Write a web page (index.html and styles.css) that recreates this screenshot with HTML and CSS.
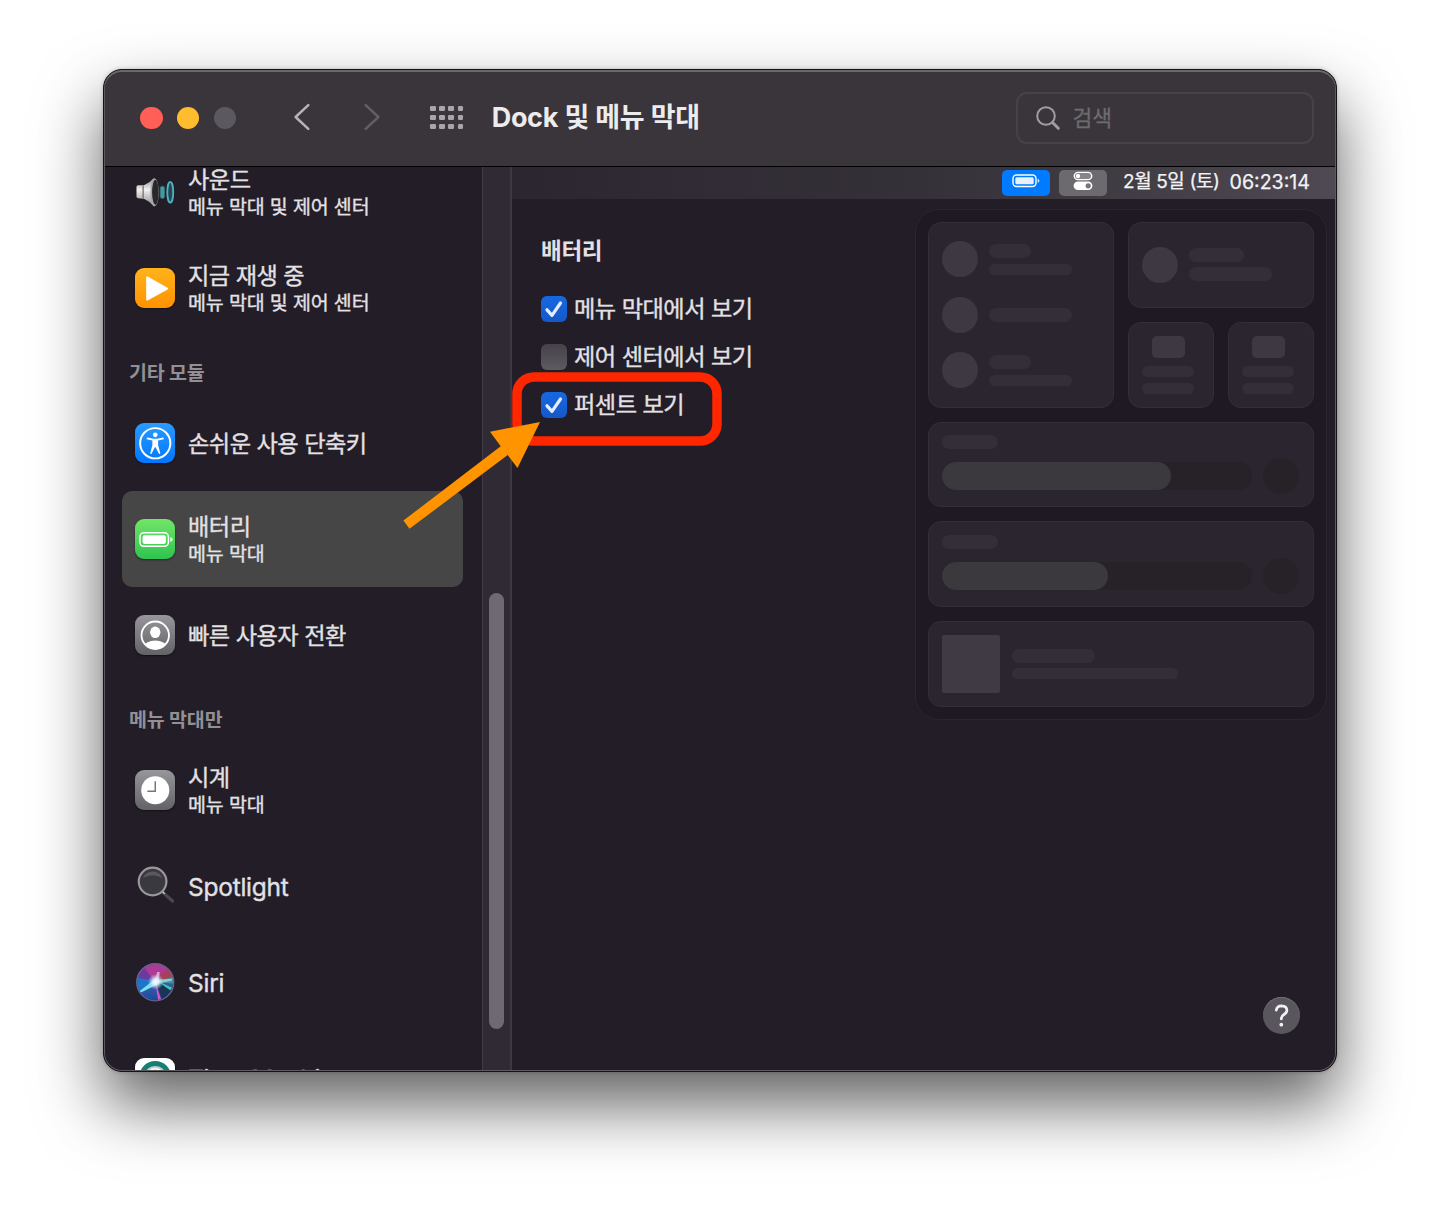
FILE: index.html
```html
<!DOCTYPE html>
<html lang="ko">
<head>
<meta charset="utf-8">
<title>Dock 및 메뉴 막대</title>
<link rel="stylesheet" href="styles.css">
</head>
<body>
<div class="window">
  <header class="titlebar">
    <div class="lights"><i class="light red"></i><i class="light yellow"></i><i class="light off"></i></div>
    <svg class="chev back" width="18" height="28" viewBox="0 0 18 28"><path d="M15.3 2.2 2.6 14l12.7 11.8"/></svg>
    <svg class="chev fwd" width="18" height="28" viewBox="0 0 18 28"><path d="M2.7 2.2 15.4 14 2.7 25.8"/></svg>
    <div class="dots"><i></i><i></i><i></i><i></i><i></i><i></i><i></i><i></i><i></i><i></i><i></i><i></i></div>
    <h1 class="title">Dock 및 메뉴 막대</h1>
    <div class="search">
      <svg width="26" height="26" viewBox="0 0 26 26"><circle cx="11" cy="11" r="8.800"/><path class="handle" d="M17.500 17.500 23.300 23.300"/></svg>
      <span>검색</span>
    </div>
  </header>
  <div class="body">
    <nav class="sidebar">
      <div class="list">
        <div class="item">
          <svg class="icon" viewBox="0 0 41 41">
            <defs><linearGradient id="cone" x1="0" y1="0" x2="0" y2="1"><stop offset="0" stop-color="#8d8d8d"/><stop offset=".4" stop-color="#f0f0f0"/><stop offset="1" stop-color="#8a8a8a"/></linearGradient></defs>
            <path fill="url(#cone)" d="M1.500 16Q1 13.800 3 13.500L9 13.300Q15 11 18.500 6.500Q20 6 21 8L21 33Q20 36 18.500 34.500Q15 29.500 9 27L3 26.500Q1 26 1.500 24Z"/>
            <path fill="#55555a" d="M7.500 14h1.500v12.500H7.500z" opacity=".7"/>
            <ellipse cx="19.800" cy="20.500" rx="4.300" ry="14" fill="#a9a9ab"/>
            <ellipse cx="20.600" cy="20.500" rx="3.300" ry="12.700" fill="#29272b"/>
            <rect x="25.500" y="14.300" width="4.500" height="12.500" rx="2.200" fill="#4c979d" stroke="#2a7079" stroke-width=".8"/>
            <ellipse cx="35.700" cy="20.500" rx="3" ry="10.500" fill="#29464f" stroke="#4fb4c0" stroke-width="1.800"/>
          </svg>
          <div class="txt"><b>사운드</b><small>메뉴 막대 및 제어 센터</small></div>
        </div>
        <div class="item">
          <svg class="icon tile orange" viewBox="0 0 41 41"><path fill="#fff" stroke="#fff" stroke-width="2" stroke-linejoin="round" d="M12.300 9.500v22.500L32.500 20.800z"/></svg>
          <div class="txt"><b>지금 재생 중</b><small>메뉴 막대 및 제어 센터</small></div>
        </div>
        <h2 class="group">기타 모듈</h2>
        <div class="item">
          <svg class="icon tile blue" viewBox="0 0 41 41"><circle cx="20.500" cy="20.500" r="15.300" fill="none" stroke="#fff" stroke-width="2"/><circle cx="20.500" cy="12" r="2.400" fill="#fff"/><path fill="#fff" d="M12.800 14.800 18.500 16h4L28.200 14.800Q29.700 15 29 16.400L23.400 17.800V22.500L25.600 30.300Q25.500 31.800 24.200 31.200L20.900 24.500h-.8L16.800 31.200Q15.500 31.800 15.400 30.300L17.600 22.500V17.800L12 16.400Q11.300 15 12.800 14.800Z"/></svg>
          <div class="txt"><b>손쉬운 사용 단축키</b></div>
        </div>
        <div class="item selected">
          <svg class="icon tile green" viewBox="0 0 41 41"><rect x="5" y="14" width="28.800" height="13.600" rx="4" fill="none" stroke="#fff" stroke-width="1.500"/><rect x="7.700" y="16.500" width="23.600" height="8.700" rx="1.800" fill="#fff"/><path fill="#fff" d="M35.800 18.300Q38 19 38 20.800T35.800 23.300Z"/></svg>
          <div class="txt"><b>배터리</b><small>메뉴 막대</small></div>
        </div>
        <div class="item">
          <svg class="icon tile gray" viewBox="0 0 41 41"><defs><clipPath id="head"><circle cx="20.500" cy="20.500" r="13.600"/></clipPath></defs><circle cx="20.500" cy="20.500" r="13.900" fill="none" stroke="#fff" stroke-width="1.900"/><g clip-path="url(#head)" fill="#fff"><ellipse cx="20.500" cy="17.500" rx="5.200" ry="5.900"/><ellipse cx="20.500" cy="33" rx="11.500" ry="7.300"/></g></svg>
          <div class="txt"><b>빠른 사용자 전환</b></div>
        </div>
        <h2 class="group">메뉴 막대만</h2>
        <div class="item">
          <svg class="icon tile gray" viewBox="0 0 41 41"><circle cx="20.500" cy="20.500" r="14.200" fill="#fff"/><path d="M20.500 11.500V21.600H12.500" fill="none" stroke="#77767a" stroke-width="1.500"/></svg>
          <div class="txt"><b>시계</b><small>메뉴 막대</small></div>
        </div>
        <div class="item">
          <svg class="icon" viewBox="0 0 41 41"><path d="M29 27.500 38 35.500" stroke="#49484c" stroke-width="3.400" stroke-linecap="round"/><path d="M27.800 25.800 30 28" stroke="#ccc" stroke-width="1.500"/><circle cx="17.800" cy="15.700" r="14" fill="#3b3940" stroke="#99989b" stroke-width="2.200"/><path d="M8 12.200a10.500 10.500 0 0 1 19.600 0Q17.800 6.700 8 12.200" fill="#5a5860"/></svg>
          <div class="txt"><b class="latin">Spotlight</b></div>
        </div>
        <div class="item">
          <svg class="icon" viewBox="0 0 41 41">
            <defs>
              <linearGradient id="orb" x1=".35" y1="0" x2=".45" y2="1"><stop offset="0" stop-color="#a83a9f"/><stop offset=".35" stop-color="#b03a8e"/><stop offset=".55" stop-color="#3a5cb0"/><stop offset="1" stop-color="#1a4a96"/></linearGradient>
              <radialGradient id="glow"><stop offset="0" stop-color="#fff"/><stop offset=".45" stop-color="#e2f2ff" stop-opacity=".8"/><stop offset="1" stop-color="#a3bdf0" stop-opacity="0"/></radialGradient>
              <clipPath id="ball"><circle cx="20.500" cy="20.500" r="18"/></clipPath>
            </defs>
            <circle cx="20.500" cy="20.500" r="18.800" fill="url(#orb)" stroke="#62648a" stroke-width="1.300"/>
            <g clip-path="url(#ball)">
              <path d="M0 8 8 4 20 20 0 22Z" fill="#6b3aa0"/>
              <path d="M20 18 34 6 40 18Z" fill="#a8405c"/><path d="M21 20 39 15 40 22Z" fill="#4b8e94"/>
              <path d="M21 20 39 26 28 40Z" fill="#1b3357"/><path d="M22 19 38 26 35.500 28.500Z" fill="#35c9ae"/>
              <path d="M19 19 3 16Q1 26 5 30Z" fill="#1f74c8"/>
              <path d="M20 17.500 4.500 29.500 6 31 24 22Z" fill="#72e4f2"/>
              <path d="M20.500 20 26.500 38 23.500 39Z" fill="#dd50c0"/><path d="M19.500 20 22.500 10 25 10 24 20Z" fill="#eba0d8"/>
              <path d="M21 18 38 17 37 19 22 22Z" fill="#7ed6cf"/>
              <circle cx="21" cy="20" r="8.200" fill="url(#glow)"/>
            </g>
          </svg>
          <div class="txt"><b class="latin">Siri</b></div>
        </div>
        <div class="item">
          <svg class="icon tile white" viewBox="0 0 41 41"><circle cx="20.500" cy="19" r="13.500" fill="#c4cecc" stroke="#177f72" stroke-width="5"/><circle cx="20.500" cy="20" r="9" fill="#63706e" stroke="#fff" stroke-width="2"/></svg>
          <div class="txt"><b class="latin">Time Machine</b></div>
        </div>
      </div>
    </nav>
    <div class="track"><div class="thumb"></div></div>
    <main class="main">
      <div class="menubar">
        <span class="pill on"><svg width="28" height="14" viewBox="0 0 28 14"><rect x="1" y="1" width="23" height="11.500" rx="3.500" fill="none" stroke="#fff" stroke-width="1.400"/><rect x="3.300" y="3.300" width="18.400" height="6.900" rx="1.500" fill="#e7f1ff"/><path fill="#cfe3ff" d="M25.600 4.800Q27.400 5.400 27.400 6.800T25.600 8.800Z"/></svg></span>
        <span class="pill"><svg width="20" height="20" viewBox="0 0 20 20"><rect x="1.300" y="1.400" width="17.400" height="7.200" rx="3.600" fill="#86848a" stroke="#fff" stroke-width="1.400"/><circle cx="5" cy="5" r="2.200" fill="#fff"/><rect x=".6" y="10.500" width="18.800" height="8.600" rx="4.300" fill="#fff"/><circle cx="15.200" cy="14.800" r="2.600" fill="#77757a"/></svg></span>
        <span class="clock"><span class="date">2월 5일 (토)</span><span>06:23:14</span></span>
      </div>
      <div class="content">
        <section class="settings">
          <h3>배터리</h3>
          <label class="opt"><span class="box checked"><svg viewBox="0 0 26 26"><path d="M6 13.800 11 19.300 19.500 7"/></svg></span>메뉴 막대에서 보기</label>
          <label class="opt"><span class="box"></span>제어 센터에서 보기</label>
          <label class="opt"><span class="box checked"><svg viewBox="0 0 26 26"><path d="M6 13.800 11 19.300 19.500 7"/></svg></span>퍼센트 보기</label>
        </section>
        <aside class="side">
          <div class="cc">
            <div class="card network">
              <div class="row"><i class="disc"></i><div class="lines"><i class="w42 h14"></i><i class="w83 h11"></i></div></div>
              <div class="row"><i class="disc"></i><div class="lines"><i class="w83 h14"></i></div></div>
              <div class="row"><i class="disc"></i><div class="lines"><i class="w42 h14"></i><i class="w83 h11"></i></div></div>
            </div>
            <div class="card focus"><div class="row"><i class="disc"></i><div class="lines tight"><i class="w55 h14"></i><i class="w83 h14"></i></div></div></div>
            <div class="card small"><i class="chip"></i><i class="bar"></i><i class="bar"></i></div>
            <div class="card small"><i class="chip"></i><i class="bar"></i><i class="bar"></i></div>
            <div class="card wide"><i class="label"></i><div class="row slide"><div class="slider"><i style="width:229px"></i></div><i class="disc dark"></i></div></div>
            <div class="card wide"><i class="label"></i><div class="row slide"><div class="slider"><i style="width:166px"></i></div><i class="disc dark"></i></div></div>
            <div class="card wide media"><i class="art"></i><div class="lines tight"><i class="w83 h14"></i><i class="w166 h11"></i></div></div>
          </div>
          <div class="help"><svg width="37" height="37" viewBox="0 0 37 37"><path d="M13.300 13.200Q13.800 8.800 18.500 8.800 23.900 9 23.900 13.300 23.900 15.700 21 17.500 18.300 19.200 18.300 21.900" fill="none" stroke="#f1f0f2" stroke-width="2.700" stroke-linecap="round"/><circle cx="18.300" cy="27.700" r="1.900" fill="#f1f0f2"/></svg></div>
        </aside>
      </div>
    </main>
  </div>
</div>
<svg class="annotation" width="1440" height="1207" viewBox="0 0 1440 1207">
  <rect x="517" y="377" width="200" height="64" rx="17" fill="none" stroke="#ff2600" stroke-width="9.500"/>
  <path fill="#ff9300" d="M403.400 520.600 500.700 446.200 490 431.700 540 422 517.500 468 507.700 455 409.500 528.800Z"/>
</svg>
</body>
</html>
```
FILE: styles.css
```css
* { box-sizing: border-box; }
body {
  margin: 0;
  width: 1440px;
  height: 1207px;
  padding: 69px 103px;
  background: #fff;
  overflow: hidden;
  position: relative;
  font-family: Inter, "Noto Sans CJK KR", sans-serif;
  color: #e3e1e4;
}
i { display: block; flex: none; }
h1, h2, h3 { margin: 0; }

.window {
  position: relative;
  width: 1234px;
  height: 1003px;
  border: 1px solid #151317;
  border-radius: 19px;
  overflow: hidden;
  background: #231d28;
  display: flex;
  flex-direction: column;
  box-shadow: 0 33px 66px rgba(0, 0, 0, .62), 0 0 4px rgba(0, 0, 0, .2);
}
.window::after {
  content: "";
  position: absolute;
  inset: 0;
  border: 1.500px solid #5d5b60;
  border-top: 2px solid #6b696e;
  border-radius: 18px;
  pointer-events: none;
}

.titlebar {
  flex: none;
  height: 97px;
  background: #39353b;
  border-bottom: 1px solid #000;
  display: flex;
  align-items: center;
  padding: 0 22px 0 36px;
}
.lights { display: flex; gap: 14.300px; }
.light { width: 22.500px; height: 22.500px; border-radius: 50%; }
.red { background: #ff5f57; }
.yellow { background: #febc2e; }
.off { background: #5b595f; }
.chev { fill: none; stroke-width: 2.500; stroke-linecap: round; stroke-linejoin: round; flex: none; margin-top: -2px; }
.back { stroke: #b5b3b7; margin-left: 57px; }
.fwd { stroke: #615f64; margin-left: 52px; }
.dots { display: grid; grid-template-columns: repeat(4, 5.600px); gap: 3.600px; margin-left: 49px; margin-top: -1px; }
.dots i { width: 5.600px; height: 5.600px; border-radius: 1.200px; background: #a8a6aa; }
.title { margin-left: 28.500px; font-size: 27px; line-height: 36px; font-weight: 700; letter-spacing: -.35px; word-spacing: .4px; color: #ecebed; white-space: nowrap; }
.search {
  margin-left: auto;
  width: 298.500px;
  height: 52px;
  border: 2px solid #454248;
  border-radius: 11px;
  display: flex;
  align-items: center;
  gap: 12px;
  padding-left: 17px;
  font-size: 21.500px;
  line-height: 28px;
  color: #6d6b70;
}
.search svg { fill: none; stroke: #9f9da2; stroke-width: 2; }
.search span { margin-top: -1px; -webkit-text-stroke: .3px; }
.search .handle { stroke-width: 3; stroke-linecap: round; }

.body { flex: 1; min-height: 0; display: flex; }
.sidebar { width: 378px; overflow: hidden; padding: 0 19px 0 18px; }
.list { margin-top: -23px; }
.item { height: 96px; display: flex; align-items: center; gap: 13px; padding-left: 12.500px; border-radius: 10px; }
.selected { background: #464646; }
.icon { width: 40.500px; height: 40.500px; flex: none; }
.tile { border-radius: 9px; box-shadow: 0 1px 2px rgba(0, 0, 0, .5); }
.orange { background: linear-gradient(#ffb31b, #ff9200); }
.blue { background: linear-gradient(#2a9bff, #0077ff); }
.green { background: linear-gradient(#72e667, #2fc350); }
.gray { background: linear-gradient(#97969a, #636266); }
.white { background: #fff; }
.txt { display: flex; flex-direction: column; white-space: nowrap; padding-top: 1px; -webkit-text-stroke: .35px; }
.txt b { font-size: 23.200px; line-height: 28px; font-weight: 400; letter-spacing: -.5px; }
.txt .latin { font-size: 24.500px; letter-spacing: -.25px; }
.txt small { font-size: 19.500px; line-height: 26px; letter-spacing: -.15px; }
.group { height: 59px; padding: 23px 0 0 7px; font-size: 19.500px; line-height: 28px; font-weight: 700; color: #929095; letter-spacing: -.15px; }

.track { flex: none; width: 30px; background: #302a35; border-left: 1px solid #413c45; border-right: 2.500px solid #3d3842; padding: 426px 5px 0 6px; }
.thumb { width: 15px; height: 436px; border-radius: 8px; background: #6d6b71; }

.main { flex: 1; min-width: 0; display: flex; flex-direction: column; }
.menubar {
  height: 32px;
  display: flex;
  align-items: center;
  justify-content: flex-end;
  padding-right: 26px;
  background: linear-gradient(90deg, #2c2631, #353138 50%, #4e4952);
}
.pill { width: 48px; height: 26px; border-radius: 5px; background: #6c6a6f; display: flex; justify-content: center; align-items: flex-start; margin-right: 9px; margin-top: -1px; }
.pill svg { margin-top: 1px; }
.on { background: #007aff; }
.on svg { margin-top: 4px; }
.clock { display: flex; justify-content: space-between; width: 187px; margin-left: 7px; font-size: 19.600px; line-height: 28px; color: #f3f2f4; white-space: nowrap; margin-top: -3px; -webkit-text-stroke: .25px; }
.date { font-size: 19px; letter-spacing: -.4px; }

.content { flex: 1; display: flex; justify-content: space-between; padding: 10px 9px 37px 29px; }
.settings { padding-top: 27px; }
.settings h3 { font-size: 22.500px; line-height: 30px; font-weight: 700; letter-spacing: -.3px; margin-bottom: 17.500px; }
.opt { display: flex; align-items: center; gap: 7px; height: 48px; padding-bottom: 2px; font-size: 23.200px; letter-spacing: -.5px; white-space: nowrap; -webkit-text-stroke: .35px; }
.box { width: 26px; height: 26px; border-radius: 6px; background: linear-gradient(#46424a, #5d5a61); margin-top: 4px; }
.checked { background: linear-gradient(#1767e2, #1459c9); }
.box svg { display: block; fill: none; stroke: #e4edfb; stroke-width: 3.200; stroke-linecap: round; stroke-linejoin: round; }

.side { width: 412px; display: flex; flex-direction: column; justify-content: space-between; align-items: flex-end; }
.cc {
  width: 412px;
  height: 511px;
  border: 1px solid #2b2530;
  border-radius: 24px;
  background: #1f1923;
  padding: 12px;
  display: grid;
  grid-template-columns: repeat(4, 1fr);
  grid-template-rows: repeat(5, 1fr);
  gap: 14px;
}
.card { background: #2b252f; border: 1px solid #332e37; border-radius: 13px; padding: 12.500px; min-width: 0; min-height: 0; }
.network { grid-column: span 2; grid-row: span 2; display: flex; flex-direction: column; justify-content: center; gap: 19.500px; }
.focus { grid-column: span 2; display: flex; align-items: center; }
.wide { grid-column: span 4; }
.row { display: flex; align-items: center; gap: 11px; }
.disc { width: 36px; height: 36px; border-radius: 50%; background: #3d3842; }
.lines { display: flex; flex-direction: column; gap: 5.500px; }
.tight { gap: 5px; }
.lines i, .bar, .label { border-radius: 7px; background: #342e38; }
.w42 { width: 42px; }
.w55 { width: 55px; }
.w83 { width: 83px; }
.w166 { width: 166px; }
.h14 { height: 14px; }
.h11 { height: 11px; }
.small { display: flex; flex-direction: column; padding-top: 13px; }
.chip { width: 33px; height: 22px; border-radius: 5px; background: #3d3842; margin: 0 0 8px 10px; }
.bar { width: 52.500px; height: 11px; margin-bottom: 6px; }
.label { width: 56px; height: 14px; }
.slide { margin-top: 9px; }
.slider { width: 310px; height: 28px; border-radius: 14px; background: #272227; }
.slider i { height: 28px; border-radius: 14px; background: #3b383e; }
.dark { background: #272227; }
.media { display: flex; align-items: center; gap: 12px; }
.art { width: 58px; height: 58px; border-radius: 2px; background: #3f3a44; }
.help { width: 37px; height: 37px; border-radius: 50%; background: #59565e; box-shadow: inset 0 1px 0 #706d74; margin-right: 27px; }
.help svg { display: block; }

.annotation { position: absolute; left: 0; top: 0; pointer-events: none; }
```
